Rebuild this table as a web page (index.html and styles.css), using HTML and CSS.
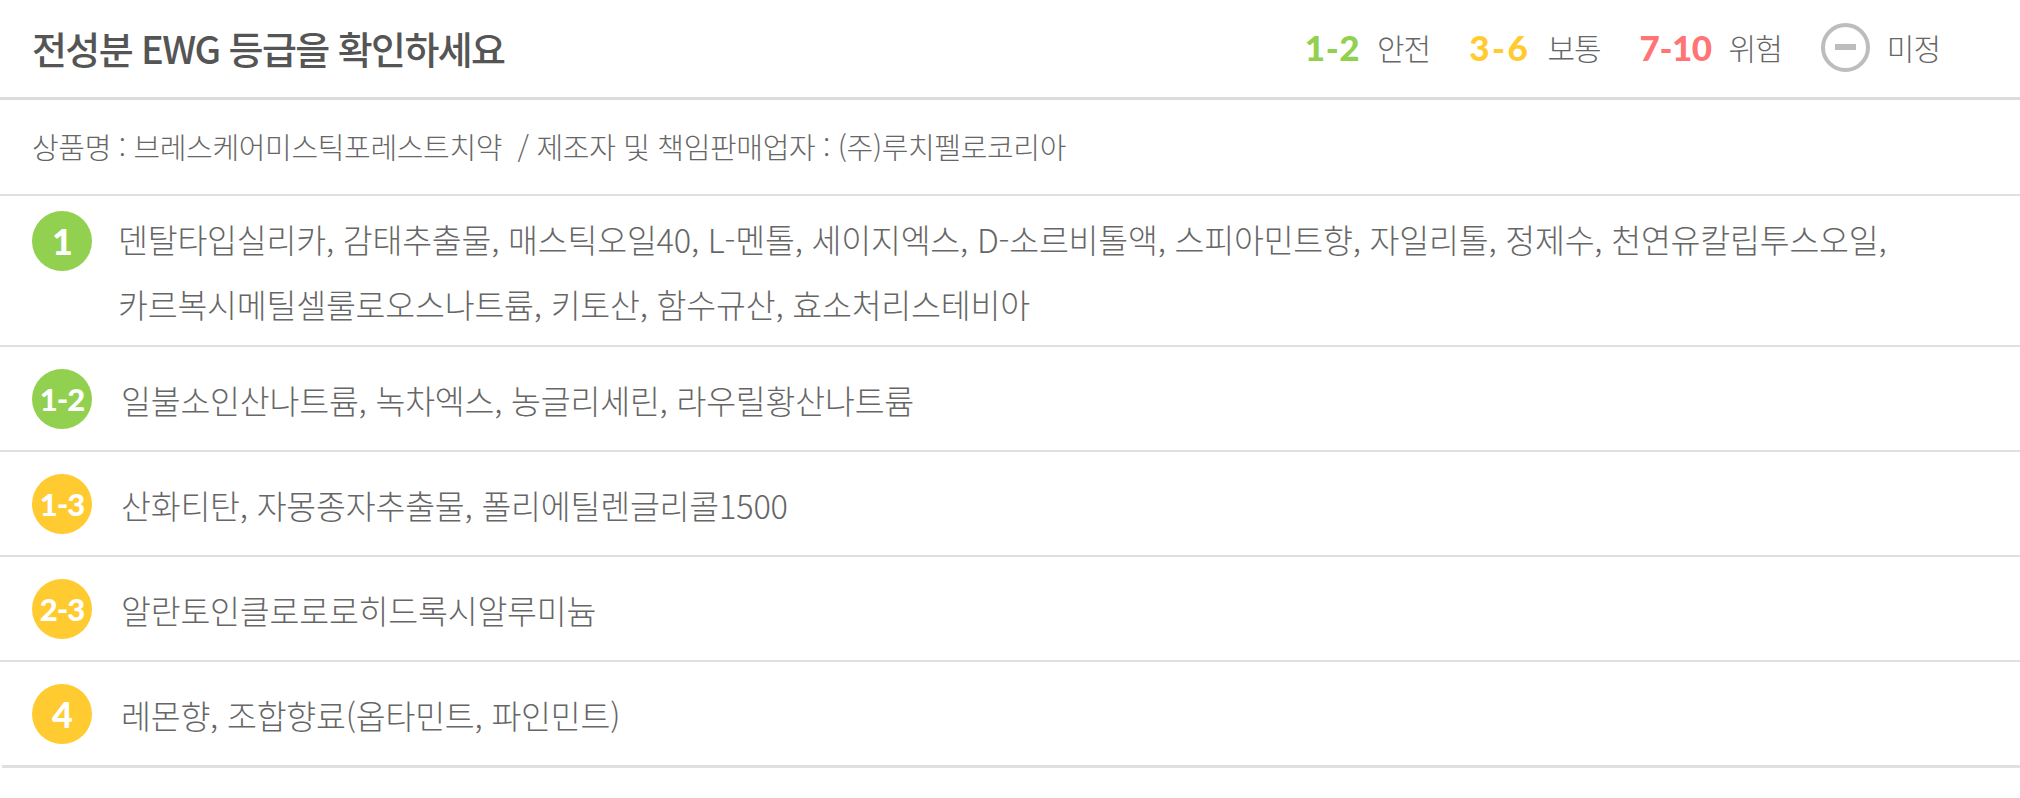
FILE: index.html
```html
<!DOCTYPE html>
<html lang="ko">
<head>
<meta charset="utf-8">
<title>전성분 EWG 등급</title>
<link rel="stylesheet" href="styles.css">
</head>
<body>
<section class="ewg">
  <header class="ewg-head">
    <h2 class="ewg-title">전성분 EWG 등급을 확인하세요</h2>
    <ul class="legend">
      <li class="legend-item"><b class="legend-num num-safe">1-2</b><span class="legend-label">안전</span></li>
      <li class="legend-item"><b class="legend-num num-mid">3-6</b><span class="legend-label">보통</span></li>
      <li class="legend-item"><b class="legend-num num-risk">7-10</b><span class="legend-label">위험</span></li>
      <li class="legend-item"><span class="undecided-icon"></span><span class="legend-label">미정</span></li>
    </ul>
  </header>
  <p class="product">상품명 : 브레스케어미스틱포레스트치약 &nbsp;/ 제조자 및 책임판매업자 : (주)루치펠로코리아</p>
  <ul class="ingredients">
    <li class="row row-multi">
      <span class="badge badge-green badge-single">1</span>
      <p class="row-text">덴탈타입실리카, 감태추출물, 매스틱오일40, L-멘톨, 세이지엑스, D-소르비톨액, 스피아민트향, 자일리톨, 정제수, 천연유칼립투스오일,<br>카르복시메틸셀룰로오스나트륨, 키토산, 함수규산, 효소처리스테비아</p>
    </li>
    <li class="row">
      <span class="badge badge-green">1-2</span>
      <p class="row-text">일불소인산나트륨, 녹차엑스, 농글리세린, 라우릴황산나트륨</p>
    </li>
    <li class="row">
      <span class="badge badge-yellow">1-3</span>
      <p class="row-text">산화티탄, 자몽종자추출물, 폴리에틸렌글리콜1500</p>
    </li>
    <li class="row">
      <span class="badge badge-yellow">2-3</span>
      <p class="row-text">알란토인클로로로히드록시알루미늄</p>
    </li>
    <li class="row row-last">
      <span class="badge badge-yellow badge-single">4</span>
      <p class="row-text">레몬향, 조합향료(옵타민트, 파인민트)</p>
    </li>
  </ul>
</section>
</body>
</html>
```

FILE: styles.css
```css
* { box-sizing: border-box; }

html, body {
  margin: 0;
  padding: 0;
  background: #fff;
}

body {
  font-family: "Noto Sans CJK KR", "Noto Sans", sans-serif;
  color: #666;
}

.ewg {
  width: 2020px;
}

.ewg-head {
  display: flex;
  align-items: center;
  justify-content: space-between;
  height: 100px;
  padding: 0 80px 3px 32px;
  border-bottom: 3px solid #dcdcdc;
}

.ewg-title {
  margin: 0;
  font-size: 38px;
  font-weight: 500;
  letter-spacing: -1.6px;
  color: #555;
}

.legend {
  display: flex;
  align-items: center;
  gap: 39px;
  margin: 0;
  padding: 0;
  list-style: none;
}

.legend-item {
  display: flex;
  align-items: center;
  gap: 17px;
}

.legend-num {
  font-family: Lato, "Noto Sans", sans-serif;
  font-weight: 900;
  font-size: 35px;
  letter-spacing: 0.5px;
}

.num-mid { letter-spacing: 2.5px; }
.num-risk { letter-spacing: -0.5px; }

.num-safe { color: #92d050; }
.num-mid { color: #ffcb30; }
.num-risk { color: #ff7474; }

.legend-label {
  font-size: 30px;
  font-weight: 300;
  letter-spacing: -1px;
  color: #666;
}

.undecided-icon {
  position: relative;
  width: 49px;
  height: 49px;
  border: 4px solid #bdbdbd;
  border-radius: 50%;
}

.undecided-icon::after {
  content: "";
  position: absolute;
  left: 10px;
  top: 17px;
  width: 21px;
  height: 6px;
  background: #bdbdbd;
}

.product {
  display: flex;
  align-items: center;
  height: 96px;
  margin: 0;
  padding: 0 32px 2px;
  border-bottom: 2px solid #e0e0e0;
  font-size: 29px;
  font-weight: 300;
  letter-spacing: -0.35px;
  color: #666;
}

.ingredients {
  margin: 0;
  padding: 0;
  list-style: none;
}

.row {
  display: flex;
  align-items: flex-start;
  gap: 29px;
  padding: 20px 0 18px 32px;
  border-bottom: 2px solid #e0e0e0;
}

.row-multi {
  gap: 26px;
  padding-top: 10px;
  padding-bottom: 9px;
}

.row-last {
  margin-left: 2px;
  padding-left: 30px;
  border-bottom-width: 3px;
}

.badge {
  flex: 0 0 60px;
  display: flex;
  align-items: center;
  justify-content: center;
  width: 60px;
  height: 60px;
  margin-top: 2px;
  border-radius: 50%;
  font-family: Lato, "Noto Sans", sans-serif;
  font-weight: 900;
  font-size: 31px;
  letter-spacing: -1px;
  color: #fff;
}

.row-multi .badge {
  margin-top: 5px;
}

.badge-single {
  font-size: 36px;
}

.badge-green { background: #92d050; }
.badge-yellow { background: #ffcb30; }

.row-text {
  margin: 0;
  font-size: 32.5px;
  font-weight: 300;
  line-height: 65px;
  letter-spacing: -0.2px;
  color: #666;
}
```
